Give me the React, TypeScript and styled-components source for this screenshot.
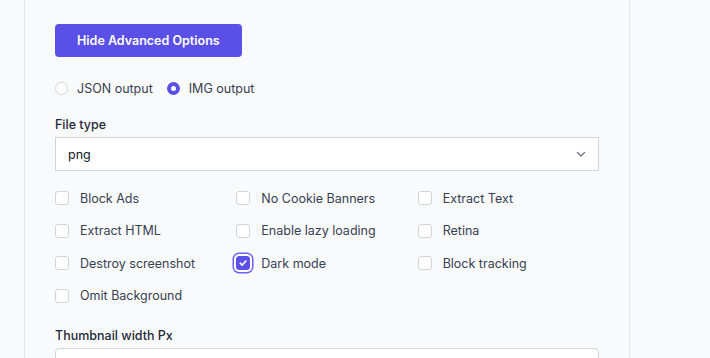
import React, { useState } from "react";
import styled, { createGlobalStyle, css } from "styled-components";

const GlobalStyle = createGlobalStyle`
  html, body {
    margin: 0;
    padding: 0;
    background: #f9fafb;
    font-family: Inter, "Noto Sans", sans-serif;
    -webkit-font-smoothing: antialiased;
  }
`;

const options = [
  { label: "Block Ads", checked: false },
  { label: "No Cookie Banners", checked: false },
  { label: "Extract Text", checked: false },
  { label: "Extract HTML", checked: false },
  { label: "Enable lazy loading", checked: false },
  { label: "Retina", checked: false },
  { label: "Destroy screenshot", checked: false },
  { label: "Dark mode", checked: true },
  { label: "Block tracking", checked: false },
  { label: "Omit Background", checked: false },
];

const App = () => {
  const [output, setOutput] = useState("img");
  const [checks, setChecks] = useState(options.map((o) => o.checked));

  return (
    <>
      <GlobalStyle />
      <Page>
        <Panel>
          <PrimaryButton type="button">Hide Advanced Options</PrimaryButton>

          <RadioRow>
            <RadioLabel onClick={() => setOutput("json")}>
              <Radio $on={output === "json"} />
              JSON output
            </RadioLabel>
            <RadioLabel onClick={() => setOutput("img")}>
              <Radio $on={output === "img"} />
              IMG output
            </RadioLabel>
          </RadioRow>

          <Field $top={17}>
            <FieldLabel>File type</FieldLabel>
            <Select>
              <span>png</span>
              <svg width="12" height="12" viewBox="0 0 12 12" fill="none">
                <path d="M2.5 4.5 6 8l3.5-3.5" stroke="#6b7280" strokeWidth="1.3" strokeLinecap="round" strokeLinejoin="round" />
              </svg>
            </Select>
          </Field>

          <CheckGrid>
            {options.map((o, i) => (
              <CheckItem
                key={o.label}
                onClick={() => setChecks((c) => c.map((v, j) => (j === i ? !v : v)))}
              >
                <Box $on={checks[i]}>
                  {checks[i] && (
                    <svg width="10" height="10" viewBox="0 0 10 10" fill="none">
                      <path d="M2.2 5.2 4.2 7.1 7.9 3" stroke="#fff" strokeWidth="1.6" strokeLinecap="round" strokeLinejoin="round" />
                    </svg>
                  )}
                </Box>
                {o.label}
              </CheckItem>
            ))}
          </CheckGrid>

          <Field $top={20}>
            <FieldLabel>Thumbnail width Px</FieldLabel>
            <Input />
          </Field>
        </Panel>
      </Page>
    </>
  );
};

export default App;

const Page = styled.div`
  height: 358px;
  overflow: hidden;
  padding-left: 24px;
`;

const Panel = styled.div`
  width: 606px;
  box-sizing: border-box;
  min-height: 420px;
  padding: 24px 30px 0 30px;
  border-left: 1px solid #e5e7eb;
  border-right: 1px solid #e5e7eb;
  background: #f9fafb;
  display: flex;
  flex-direction: column;
  align-items: flex-start;
`;

const PrimaryButton = styled.button`
  height: 33px;
  padding: 0 22px;
  border: none;
  border-radius: 4px;
  background: #5a4fe6;
  color: #fff;
  font-family: Inter, sans-serif;
  font-size: 12.5px;
  font-weight: 600;
  cursor: pointer;
`;

const RadioRow = styled.div`
  margin-top: 21px;
  display: flex;
  gap: 14px;
`;

const RadioLabel = styled.label`
  display: flex;
  align-items: center;
  gap: 9px;
  height: 20px;
  font-size: 12.5px;
  color: #374151;
  cursor: pointer;
`;

const Radio = styled.span<{ $on: boolean }>`
  width: 13px;
  height: 13px;
  box-sizing: border-box;
  border-radius: 50%;
  border: 1px solid #d1d5db;
  background: #fff;
  ${({ $on }) =>
    $on &&
    css`
      border: 4px solid #5a4fe6;
    `}
`;

const Field = styled.div<{ $top?: number }>`
  margin-top: ${({ $top }) => $top ?? 16}px;
  align-self: stretch;
  display: flex;
  flex-direction: column;
`;

const FieldLabel = styled.div`
  font-size: 12.5px;
  font-weight: 500;
  color: #1f2937;
  line-height: 20px;
  margin-bottom: 2px;
`;

const Select = styled.div`
  height: 34px;
  box-sizing: border-box;
  border: 1px solid #d1d5db;
  background: #fff;
  padding: 0 11px 0 12px;
  display: flex;
  align-items: center;
  justify-content: space-between;
  font-size: 12.5px;
  color: #111827;
`;

const Input = styled.div`
  height: 34px;
  box-sizing: border-box;
  border: 1px solid #d1d5db;
  border-radius: 4px;
  background: #fff;
`;

const CheckGrid = styled.div`
  margin-top: 17px;
  align-self: stretch;
  display: grid;
  grid-template-columns: repeat(3, 1fr);
  row-gap: 12.5px;
`;

const CheckItem = styled.label`
  display: flex;
  align-items: center;
  gap: 11px;
  height: 20px;
  font-size: 12.5px;
  color: #374151;
  cursor: pointer;
`;

const Box = styled.span<{ $on: boolean }>`
  width: 14px;
  height: 14px;
  box-sizing: border-box;
  border-radius: 3px;
  border: 1px solid #d1d5db;
  background: #fff;
  display: flex;
  align-items: center;
  justify-content: center;
  ${({ $on }) =>
    $on &&
    css`
      border-color: #5a4fe6;
      background: #5a4fe6;
      box-shadow: 0 0 0 2px #fff, 0 0 0 3.5px #6c63f0;
    `}
`;
